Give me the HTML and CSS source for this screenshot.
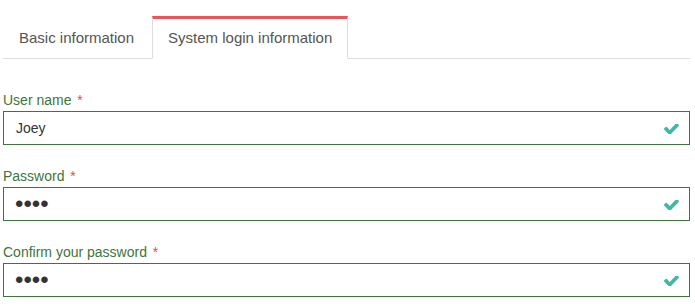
FILE: index.html
```html
<!DOCTYPE html>
<html lang="en">
<head>
    <meta charset="UTF-8">
    <meta name="viewport" content="width=device-width, initial-scale=1.0">
    <title>Account - System login information</title>
    <link rel="stylesheet" href="styles.css">
</head>
<body>
    <div class="page">
        <ul class="nav-tabs">
            <li class="tab"><a href="#basic">Basic information</a></li>
            <li class="tab active"><a href="#login">System login information</a></li>
        </ul>

        <form class="login-form" id="loginForm">
            <div class="form-group has-success">
                <label for="username">User name <span class="required">*</span></label>
                <div class="input-wrap">
                    <input type="text" id="username" name="username" value="Joey">
                    <svg class="check" viewBox="121 430 1550 996" preserveAspectRatio="none"><path d="M1671 566q0 40-28 68l-724 724-136 136q-28 28-68 28t-68-28l-136-136-362-362q-28-28-28-68t28-68l136-136q28-28 68-28t68 28l294 295 656-657q28-28 68-28t68 28l136 136q28 28 28 68z"/></svg>
                </div>
            </div>
            <div class="form-group has-success">
                <label for="password">Password <span class="required">*</span></label>
                <div class="input-wrap">
                    <input type="password" class="secret" id="password" name="password" value="1234">
                    <svg class="check" viewBox="121 430 1550 996" preserveAspectRatio="none"><path d="M1671 566q0 40-28 68l-724 724-136 136q-28 28-68 28t-68-28l-136-136-362-362q-28-28-28-68t28-68l136-136q28-28 68-28t68 28l294 295 656-657q28-28 68-28t68 28l136 136q28 28 28 68z"/></svg>
                </div>
            </div>
            <div class="form-group has-success">
                <label for="confirm">Confirm your password <span class="required">*</span></label>
                <div class="input-wrap">
                    <input type="password" class="secret" id="confirm" name="confirm" value="1234">
                    <svg class="check" viewBox="121 430 1550 996" preserveAspectRatio="none"><path d="M1671 566q0 40-28 68l-724 724-136 136q-28 28-68 28t-68-28l-136-136-362-362q-28-28-28-68t28-68l136-136q28-28 68-28t68 28l294 295 656-657q28-28 68-28t68 28l136 136q28 28 28 68z"/></svg>
                </div>
            </div>
        </form>
    </div>
</body>
</html>
```

FILE: styles.css
```css
:root {
    --text: #555;
    --border: #ddd;
    --accent: #f0525a;
    --success: #3c763d;
    --check: #3fb9a7;
}
body {
    font-family: 'Liberation Sans', Arial, sans-serif;
    margin: 0;
    padding: 0;
    background: #fff;
    color: #333;
}
.page {
    padding: 0 5px 0 3px;
}
.nav-tabs {
    list-style: none;
    margin: 0;
    padding: 16px 0 0;
    display: flex;
    border-bottom: 1px solid var(--border);
}
.tab {
    margin: 0 2px -1px 0;
}
.tab a {
    display: block;
    padding: 9px 15px 10px;
    font-size: 15px;
    line-height: 20px;
    color: var(--text);
    text-decoration: none;
    border: 1px solid transparent;
    border-top-width: 3px;
}
.tab.active a {
    background: #fff;
    border-color: var(--border);
    border-top-color: var(--accent);
    border-bottom-color: #fff;
}
.login-form {
    padding-top: 31px;
}
.form-group {
    margin-bottom: 21px;
}
.form-group label {
    display: block;
    font-size: 14px;
    line-height: 20px;
    margin-bottom: 1px;
}
.has-success label {
    color: var(--success);
}
.required {
    color: #e74c3c;
    margin-left: 2px;
}
.input-wrap {
    position: relative;
}
.input-wrap input {
    display: block;
    box-sizing: border-box;
    width: 100%;
    height: 34px;
    margin: 0;
    padding: 0 36px 0 12px;
    font-family: inherit;
    font-size: 14px;
    color: #333;
    border: 1px solid var(--success);
    border-radius: 0;
    outline: none;
}
.input-wrap input.secret {
    font-size: 24px;
    padding-left: 11px;
}
.check {
    position: absolute;
    right: 11px;
    top: 13px;
    width: 15px;
    height: 10px;
    fill: var(--check);
}
```
